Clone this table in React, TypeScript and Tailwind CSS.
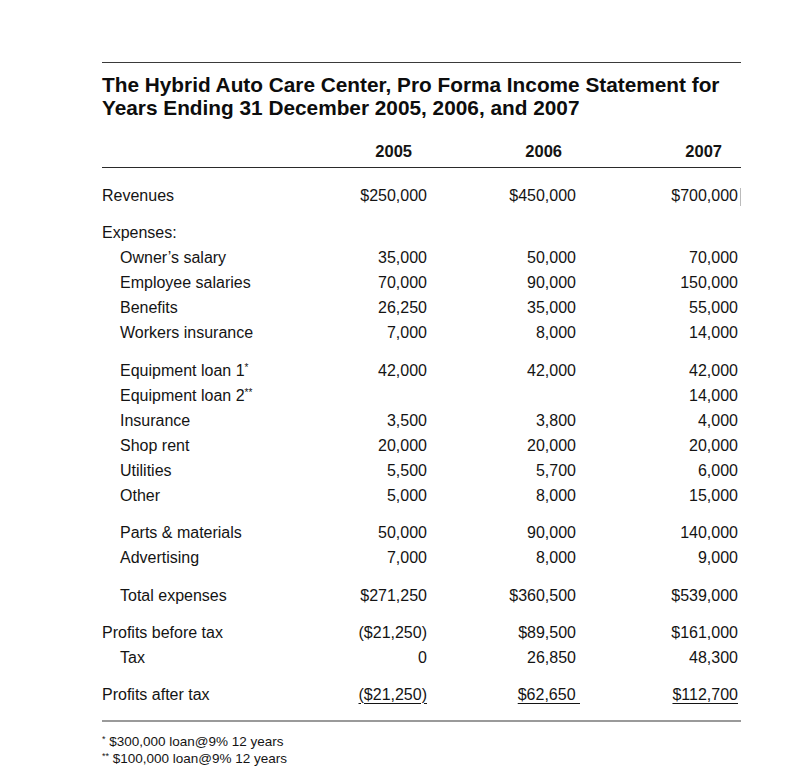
const font = { fontFamily: '"Liberation Sans", Arial, sans-serif' };

type Row = {
  label: string;
  indent?: boolean;
  values?: [string, string, string];
  gap?: string;
  underline?: boolean;
  mark?: string;
};

const rows: Row[] = [
  { label: 'Revenues', values: ['$250,000', '$450,000', '$700,000'] },
  { label: 'Expenses:', gap: 'mt-[12px]' },
  { label: 'Owner’s salary', indent: true, values: ['35,000', '50,000', '70,000'] },
  { label: 'Employee salaries', indent: true, values: ['70,000', '90,000', '150,000'] },
  { label: 'Benefits', indent: true, values: ['26,250', '35,000', '55,000'] },
  { label: 'Workers insurance', indent: true, values: ['7,000', '8,000', '14,000'] },
  { label: 'Equipment loan 1', mark: '*', indent: true, gap: 'mt-[13px]', values: ['42,000', '42,000', '42,000'] },
  { label: 'Equipment loan 2', mark: '**', indent: true, values: ['', '', '14,000'] },
  { label: 'Insurance', indent: true, values: ['3,500', '3,800', '4,000'] },
  { label: 'Shop rent', indent: true, values: ['20,000', '20,000', '20,000'] },
  { label: 'Utilities', indent: true, values: ['5,500', '5,700', '6,000'] },
  { label: 'Other', indent: true, values: ['5,000', '8,000', '15,000'] },
  { label: 'Parts & materials', indent: true, gap: 'mt-[12px]', values: ['50,000', '90,000', '140,000'] },
  { label: 'Advertising', indent: true, values: ['7,000', '8,000', '9,000'] },
  { label: 'Total expenses', indent: true, gap: 'mt-[13px]', values: ['$271,250', '$360,500', '$539,000'] },
  { label: 'Profits before tax', gap: 'mt-[12px]', values: ['($21,250)', '$89,500', '$161,000'] },
  { label: 'Tax', indent: true, values: ['0', '26,850', '48,300'] },
  { label: 'Profits after tax', gap: 'mt-[12px]', underline: true, values: ['($21,250)', '$62,650', '$112,700'] },
];

const ul = 'underline decoration-1 underline-offset-[3px]';

export default function App() {
  return (
    <div className="min-h-[777px] bg-white text-[#141414]" style={font}>
      <div className="ml-[102px] w-[639px] pt-[62px]">
        <div className="border-t border-[#3a3a3a]" />
        <h1 className="mt-[10px] text-[20.8px] font-bold leading-[23px] text-[#0d0d0d]">
          The Hybrid Auto Care Center, Pro Forma Income Statement for
          <br />
          Years Ending 31 December 2005, 2006, and 2007
        </h1>

        <div className="mt-[20px] grid h-[25px] grid-cols-[225px_100px_149px_162px] items-center text-[16.5px] font-bold">
          <div />
          <div className="pr-[15px] text-right">2005</div>
          <div className="pr-[14px] text-right">2006</div>
          <div className="pr-[16px] text-right">2007</div>
        </div>
        <div className="mt-[3px] border-t-[1.5px] border-[#2a2a2a]" />

        <div className="mt-[15px] flex flex-col text-[16px]">
          {rows.map((r) => (
            <div
              key={r.label}
              className={`grid h-[25px] grid-cols-[225px_100px_149px_162px] items-center ${r.gap ?? ''}`}
            >
              <div className={r.indent ? 'pl-[18px]' : ''}>
                {r.label}
                {r.mark && <sup className="text-[10px]">{r.mark}</sup>}
              </div>
              {r.values && (
                <>
                  <div className="flex justify-end">
                    <span className={r.underline ? ul : ''}>{r.values[0]}</span>
                  </div>
                  <div className={`flex justify-end ${r.underline ? 'mr-[-4px]' : ''}`}>
                    <span className={r.underline ? ul : ''}>
                      {r.underline ? r.values[1] + '\u00a0' : r.values[1]}
                    </span>
                  </div>
                  <div className="relative flex justify-end">
                    <span className={r.underline ? ul : ''}>{r.values[2]}</span>
                    {r.label === 'Revenues' && (
                      <span className="absolute right-[-3px] top-[4px] h-[18px] w-px bg-[#bbb]" />
                    )}
                  </div>
                </>
              )}
            </div>
          ))}
        </div>

        <div className="mt-[13px] border-t-2 border-[#9a9a9a]" />
        <div className="mt-[11px] text-[13.5px] leading-[17px]">
          <p>
            <sup className="text-[9px]">*</sup> $300,000 loan@9% 12 years
          </p>
          <p>
            <sup className="text-[9px]">**</sup> $100,000 loan@9% 12 years
          </p>
        </div>
      </div>
    </div>
  );
}
